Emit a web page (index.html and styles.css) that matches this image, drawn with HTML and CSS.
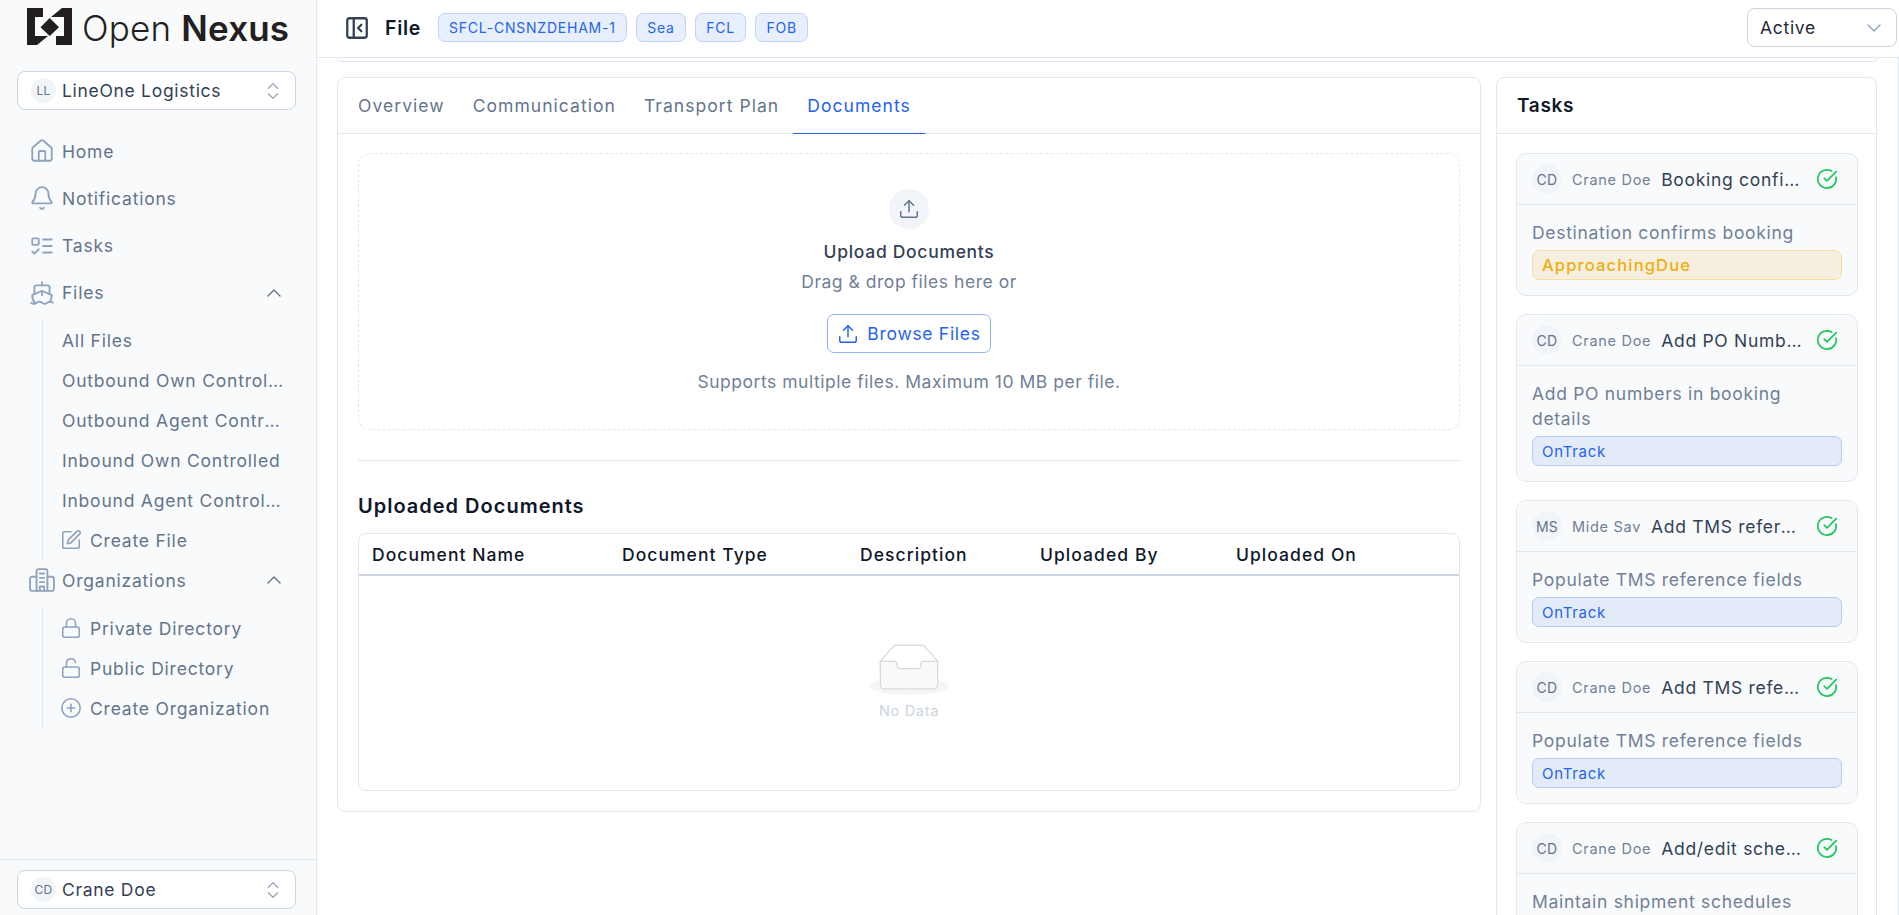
FILE: index.html
```html
<!DOCTYPE html>
<html lang="en">
<head>
    <meta charset="UTF-8">
    <meta name="viewport" content="width=device-width, initial-scale=1.0">
    <title>File - Open Nexus</title>
    <link rel="stylesheet" href="styles.css">
</head>
<body>
    <svg class="sprite" width="0" height="0">
        <symbol id="i-home" viewBox="0 0 24 24"><path d="M15 21v-8a1 1 0 0 0-1-1h-4a1 1 0 0 0-1 1v8"/><path d="M3 10a2 2 0 0 1 .709-1.528l7-5.999a2 2 0 0 1 2.582 0l7 5.999A2 2 0 0 1 21 10v9a2 2 0 0 1-2 2H5a2 2 0 0 1-2-2z"/></symbol>
        <symbol id="i-bell" viewBox="0 0 24 24"><path d="M10.268 21a2 2 0 0 0 3.464 0"/><path d="M3.262 15.326A1 1 0 0 0 4 17h16a1 1 0 0 0 .74-1.673C19.41 13.956 18 12.499 18 8A6 6 0 0 0 6 8c0 4.499-1.411 5.956-2.738 7.326"/></symbol>
        <symbol id="i-tasks" viewBox="0 0 24 24"><rect x="3" y="5" width="6" height="6" rx="1"/><path d="m3 17 2 2 4-4"/><path d="M13 6h8"/><path d="M13 12h8"/><path d="M13 18h8"/></symbol>
        <symbol id="i-ship" viewBox="0 0 24 24"><path d="M12 10.189V14"/><path d="M12 2v3"/><path d="M19 13V7a2 2 0 0 0-2-2H7a2 2 0 0 0-2 2v6"/><path d="M19.38 20A11.6 11.6 0 0 0 21 14l-8.188-3.639a2 2 0 0 0-1.624 0L3 14a11.6 11.6 0 0 0 2.81 7.76"/><path d="M2 21c.6.5 1.2 1 2.5 1 2.5 0 2.5-2 5-2 1.3 0 1.9.5 2.5 1s1.2 1 2.5 1c2.5 0 2.5-2 5-2 1.3 0 1.9.5 2.5 1"/></symbol>
        <symbol id="i-updown" viewBox="0 0 24 24"><path d="m7 15 5 5 5-5"/><path d="m7 9 5-5 5 5"/></symbol>
        <symbol id="i-up" viewBox="0 0 24 24"><path d="m18 15-6-6-6 6"/></symbol>
        <symbol id="i-down" viewBox="0 0 24 24"><path d="m6 9 6 6 6-6"/></symbol>
        <symbol id="i-pen" viewBox="0 0 24 24"><path d="M12 3H5a2 2 0 0 0-2 2v14a2 2 0 0 0 2 2h14a2 2 0 0 0 2-2v-7"/><path d="M18.375 2.625a1 1 0 0 1 3 3l-9.013 9.014a2 2 0 0 1-.853.505l-2.873.84a.5.5 0 0 1-.62-.62l.84-2.873a2 2 0 0 1 .506-.852z"/></symbol>
        <symbol id="i-building" viewBox="0 0 24 24"><path d="M7 22V4a2 2 0 0 1 2-2h6a2 2 0 0 1 2 2v18Z"/><path d="M7 9H3a2 2 0 0 0-2 2v9a2 2 0 0 0 2 2h4"/><path d="M17 9h4a2 2 0 0 1 2 2v9a2 2 0 0 1-2 2h-4"/><path d="M10 6h4"/><path d="M10 10h4"/><path d="M10 14h4"/><path d="M10 22v-4h4v4"/></symbol>
        <symbol id="i-lock" viewBox="0 0 24 24"><rect width="18" height="11" x="3" y="11" rx="2"/><path d="M7 11V7a5 5 0 0 1 10 0v4"/></symbol>
        <symbol id="i-unlock" viewBox="0 0 24 24"><rect width="18" height="11" x="3" y="11" rx="2"/><path d="M7 11V7a5 5 0 0 1 9.9-1"/></symbol>
        <symbol id="i-plus" viewBox="0 0 24 24"><circle cx="12" cy="12" r="10"/><path d="M8 12h8"/><path d="M12 8v8"/></symbol>
        <symbol id="i-upload" viewBox="0 0 24 24"><path d="M12 3v12"/><path d="m17 8-5-5-5 5"/><path d="M21 15v4a2 2 0 0 1-2 2H5a2 2 0 0 1-2-2v-4"/></symbol>
        <symbol id="i-panel" viewBox="0 0 24 24"><rect width="18" height="18" x="3" y="3" rx="2"/><path d="M9 3v18"/><path d="m16 15-3-3 3-3"/></symbol>
        <symbol id="i-check" viewBox="0 0 24 24"><path d="M21.801 10A10 10 0 1 1 17 3.335"/><path d="m9 11 3 3L22 4"/></symbol>
    </svg>

    <div class="app">
        <aside class="sidebar">
            <div class="logo">
                <svg class="logo-mark" viewBox="0 0 45 37">
                    <polygon points="0,0 16,0 16,9 8,9 8,28 21,28 10,37 0,37"/>
                    <polygon points="45,0 45,37 29,37 29,28 37,28 37,9 24,9 35,0"/>
                    <polygon points="22.7,10 32,19.3 22.7,28 13.5,19.3"/>
                </svg>
                <span class="logo-text"><span class="logo-light">Open</span> <b>Nexus</b></span>
            </div>

            <button class="select-box org-select">
                <span class="avatar">LL</span>
                <span class="select-name">LineOne Logistics</span>
                <svg class="icon updown"><use href="#i-updown"/></svg>
            </button>

            <nav class="nav">
                <a class="nav-item"><svg class="icon"><use href="#i-home"/></svg>Home</a>
                <a class="nav-item"><svg class="icon"><use href="#i-bell"/></svg>Notifications</a>
                <a class="nav-item"><svg class="icon"><use href="#i-tasks"/></svg>Tasks</a>
                <a class="nav-item"><svg class="icon"><use href="#i-ship"/></svg>Files<svg class="icon caret"><use href="#i-up"/></svg></a>
                <div class="sub-list">
                    <a class="sub-item"><span class="truncate">All Files</span></a>
                    <a class="sub-item"><span class="truncate">Outbound Own Controlled</span></a>
                    <a class="sub-item"><span class="truncate">Outbound Agent Controlled</span></a>
                    <a class="sub-item"><span class="truncate">Inbound Own Controlled</span></a>
                    <a class="sub-item"><span class="truncate">Inbound Agent Controlled</span></a>
                    <a class="sub-item"><svg class="icon small"><use href="#i-pen"/></svg>Create File</a>
                </div>
                <a class="nav-item org-item"><svg class="icon"><use href="#i-building"/></svg>Organizations<svg class="icon caret"><use href="#i-up"/></svg></a>
                <div class="sub-list">
                    <a class="sub-item"><svg class="icon small"><use href="#i-lock"/></svg>Private Directory</a>
                    <a class="sub-item"><svg class="icon small"><use href="#i-unlock"/></svg>Public Directory</a>
                    <a class="sub-item"><svg class="icon small"><use href="#i-plus"/></svg>Create Organization</a>
                </div>
            </nav>

            <div class="sidebar-footer">
                <button class="select-box">
                    <span class="avatar">CD</span>
                    <span class="select-name">Crane Doe</span>
                    <svg class="icon updown"><use href="#i-updown"/></svg>
                </button>
            </div>
        </aside>

        <div class="page">
            <header class="topbar">
                <svg class="icon panel-toggle"><use href="#i-panel"/></svg>
                <h1>File</h1>
                <div class="chips">
                    <span class="chip">SFCL-CNSNZDEHAM-1</span>
                    <span class="chip">Sea</span>
                    <span class="chip">FCL</span>
                    <span class="chip">FOB</span>
                </div>
                <button class="status-select">Active<svg class="icon"><use href="#i-down"/></svg></button>
            </header>

            <div class="content">
                <div class="summary-edge"></div>
                <div class="columns">
                    <section class="card main-card">
                        <div class="tabs">
                            <a class="tab">Overview</a>
                            <a class="tab">Communication</a>
                            <a class="tab">Transport Plan</a>
                            <a class="tab active">Documents</a>
                        </div>
                        <div class="documents">
                            <div class="dropzone">
                                <span class="upload-circle"><svg class="icon"><use href="#i-upload"/></svg></span>
                                <div class="drop-title">Upload Documents</div>
                                <div class="drop-text">Drag &amp; drop files here or</div>
                                <button class="browse-btn"><svg class="icon"><use href="#i-upload"/></svg>Browse Files</button>
                                <div class="drop-hint">Supports multiple files. Maximum 10 MB per file.</div>
                            </div>
                            <hr class="divider">
                            <h2>Uploaded Documents</h2>
                            <div class="table-wrap">
                                <table class="doc-table">
                                    <thead>
                                        <tr>
                                            <th class="col-name">Document Name</th>
                                            <th class="col-type">Document Type</th>
                                            <th class="col-desc">Description</th>
                                            <th class="col-by">Uploaded By</th>
                                            <th>Uploaded On</th>
                                        </tr>
                                    </thead>
                                </table>
                                <div class="empty">
                                    <svg class="empty-img" viewBox="0 0 64 41">
                                        <g transform="translate(0 1)" fill="none" fill-rule="evenodd">
                                            <ellipse fill="#f5f5f5" cx="32" cy="33" rx="32" ry="7"/>
                                            <g fill-rule="nonzero" stroke="#d9d9d9">
                                                <path d="M55 12.76L44.854 1.258C44.367.474 43.656 0 42.907 0H21.093c-.749 0-1.46.474-1.947 1.257L9 12.761V22h46v-9.24z"/>
                                                <path d="M41.613 15.931c0-1.605.994-2.93 2.227-2.931H55v18.137C55 33.26 53.68 35 52.05 35h-40.1C10.32 35 9 33.259 9 31.137V13h11.16c1.233 0 2.227 1.323 2.227 2.928v.022c0 1.605 1.005 2.901 2.237 2.901h14.752c1.232 0 2.237-1.308 2.237-2.913v-.007z" fill="#fafafa"/>
                                            </g>
                                        </g>
                                    </svg>
                                    <div class="empty-text">No Data</div>
                                </div>
                            </div>
                        </div>
                    </section>

                    <section class="card tasks-card">
                        <div class="tasks-head">Tasks</div>
                        <div class="task-list">
                            <article class="task">
                                <div class="task-head">
                                    <span class="avatar">CD</span>
                                    <span class="task-owner">Crane Doe</span>
                                    <span class="task-title">Booking confirmation</span>
                                    <svg class="icon task-check"><use href="#i-check"/></svg>
                                </div>
                                <div class="task-body">
                                    <p>Destination confirms booking</p>
                                    <span class="badge warn">ApproachingDue</span>
                                </div>
                            </article>
                            <article class="task">
                                <div class="task-head">
                                    <span class="avatar">CD</span>
                                    <span class="task-owner">Crane Doe</span>
                                    <span class="task-title">Add PO Numbers</span>
                                    <svg class="icon task-check"><use href="#i-check"/></svg>
                                </div>
                                <div class="task-body">
                                    <p>Add PO numbers in booking details</p>
                                    <span class="badge">OnTrack</span>
                                </div>
                            </article>
                            <article class="task">
                                <div class="task-head">
                                    <span class="avatar">MS</span>
                                    <span class="task-owner">Mide Sav</span>
                                    <span class="task-title">Add TMS reference</span>
                                    <svg class="icon task-check"><use href="#i-check"/></svg>
                                </div>
                                <div class="task-body">
                                    <p>Populate TMS reference fields</p>
                                    <span class="badge">OnTrack</span>
                                </div>
                            </article>
                            <article class="task">
                                <div class="task-head">
                                    <span class="avatar">CD</span>
                                    <span class="task-owner">Crane Doe</span>
                                    <span class="task-title">Add TMS reference</span>
                                    <svg class="icon task-check"><use href="#i-check"/></svg>
                                </div>
                                <div class="task-body">
                                    <p>Populate TMS reference fields</p>
                                    <span class="badge">OnTrack</span>
                                </div>
                            </article>
                            <article class="task">
                                <div class="task-head">
                                    <span class="avatar">CD</span>
                                    <span class="task-owner">Crane Doe</span>
                                    <span class="task-title">Add/edit schedule</span>
                                    <svg class="icon task-check"><use href="#i-check"/></svg>
                                </div>
                                <div class="task-body">
                                    <p>Maintain shipment schedules</p>
                                </div>
                            </article>
                        </div>
                    </section>
                </div>
            </div>
        </div>
    </div>
</body>
</html>
```

FILE: styles.css
```css
* {
    box-sizing: border-box;
}
html, body {
    height: 100%;
}
body {
    margin: 0;
    overflow: hidden;
    font-family: 'Inter', 'Noto Sans', sans-serif;
    font-size: 17.5px;
    letter-spacing: 0.04em;
    color: #334155;
    background-color: #fff;
}
button {
    font: inherit;
    letter-spacing: inherit;
    cursor: pointer;
}
.sprite {
    position: absolute;
}
.icon {
    width: 20px;
    height: 20px;
    flex: none;
    fill: none;
    stroke: #8fa3bf;
    stroke-width: 1.7;
    stroke-linecap: round;
    stroke-linejoin: round;
}
.icon.small {
    width: 22px;
    height: 22px;
    margin-left: -2px;
}
.truncate {
    display: block;
    width: 222px;
    overflow: hidden;
    white-space: nowrap;
    text-overflow: ellipsis;
}
.app {
    display: flex;
    height: 100%;
}

/* sidebar */
.sidebar {
    width: 317px;
    flex: none;
    display: flex;
    flex-direction: column;
    height: 100%;
    background-color: #f8fafc;
    border-right: 1px solid #e2e8f0;
}
.logo {
    height: 71px;
    display: flex;
    align-items: flex-start;
    gap: 10px;
    padding: 8px 0 0 27px;
    color: #231f20;
}
.logo-mark {
    width: 45px;
    height: 37px;
    fill: #231f20;
}
.logo-text {
    margin-top: 2px;
    font-size: 35px;
    line-height: 37px;
    letter-spacing: 0.005em;
    white-space: nowrap;
}
.logo-light {
    font-weight: 300;
}
.logo-text b {
    font-weight: 600;
}
.select-box {
    width: 279px;
    height: 39px;
    margin-left: 17px;
    padding: 0 11px 0 13px;
    display: flex;
    align-items: center;
    gap: 6px;
    background-color: #fff;
    border: 1px solid #cbd5e1;
    border-radius: 8px;
    color: #334155;
    text-align: left;
}
.select-name {
    flex: 1;
}
.avatar {
    width: 25px;
    height: 25px;
    flex: none;
    display: flex;
    align-items: center;
    justify-content: center;
    border-radius: 50%;
    background-color: #f1f5f9;
    color: #64748b;
    font-size: 12px;
    letter-spacing: 0.02em;
}
.updown {
    width: 22px;
    height: 22px;
    stroke-width: 1.4;
}
.nav {
    flex: 1;
    margin-top: 21px;
    padding: 0 17px;
    color: #64748b;
    letter-spacing: 0.045em;
}
.nav-item {
    height: 40px;
    margin-bottom: 7.33px;
    padding-left: 12px;
    display: flex;
    align-items: center;
    gap: 7px;
}
.nav-item > .icon:first-child {
    width: 26px;
    height: 26px;
}
.nav-item > .caret {
    width: 24px;
    height: 24px;
    margin-left: auto;
    margin-right: 13px;
    stroke: #64748b;
    stroke-width: 1.4;
}
.org-item {
    margin-bottom: 8px;
}
.sub-list {
    margin-left: 25px;
    padding-left: 19px;
    border-left: 1px solid #e2e8f0;
}
.sub-item {
    height: 40px;
    display: flex;
    align-items: center;
    gap: 8px;
}
.sidebar-footer {
    height: 56px;
    padding-top: 10px;
    border-top: 1px solid #e2e8f0;
}

/* top bar */
.page {
    flex: 1;
    min-width: 0;
    display: flex;
    flex-direction: column;
    height: 100%;
}
.topbar {
    height: 58px;
    flex: none;
    display: flex;
    align-items: center;
    padding: 0 2px 2px 27px;
    border-bottom: 1px solid #e2e8f0;
}
.panel-toggle {
    width: 26px;
    height: 26px;
    stroke: #334155;
    stroke-width: 2.1;
}
h1 {
    margin: 0 17px 0 15px;
    font-size: 19.5px;
    font-weight: 600;
    color: #0f172a;
}
.chips {
    display: flex;
    gap: 9.5px;
}
.chip {
    height: 29px;
    padding: 0 10px;
    display: flex;
    align-items: center;
    background-color: #e8effc;
    border: 1px solid #bfd3f8;
    border-radius: 7px;
    color: #2563eb;
    font-size: 14px;
    letter-spacing: 0.055em;
}
.status-select {
    width: 150px;
    height: 39px;
    margin-left: auto;
    padding: 0 10px 0 12px;
    display: flex;
    align-items: center;
    justify-content: space-between;
    background-color: #fff;
    border: 1px solid #cbd5e1;
    border-radius: 8px;
    color: #1e293b;
}
.status-select .icon {
    width: 24px;
    height: 24px;
    stroke-width: 1.4;
}

/* content */
.content {
    flex: 1;
    min-height: 0;
    overflow: hidden;
    padding: 0 21px 0 20px;
    border-right: 1px solid #e2e8f0;
}
.summary-edge {
    height: 4px;
    margin-bottom: 15px;
    border: 1px solid #e2e8f0;
    border-top: 0;
    border-radius: 0 0 8px 8px;
}
.columns {
    display: grid;
    grid-template-columns: 1fr 381px;
    gap: 15px;
    align-items: start;
}
.card {
    background-color: #fff;
    border: 1px solid #e2e8f0;
    border-radius: 8px;
}
.tabs {
    height: 56px;
    padding-left: 6px;
    display: flex;
    border-bottom: 1px solid #e2e8f0;
}
.tab {
    padding: 0 14px;
    display: flex;
    align-items: center;
    color: #64748b;
    letter-spacing: 0.06em;
    border-bottom: 1px solid transparent;
    margin-bottom: -1px;
}
.tab.active {
    color: #2563eb;
    border-bottom-color: #2563eb;
}
.documents {
    padding: 19px 20px 20px;
}
.dropzone {
    height: 277px;
    padding-top: 35px;
    display: flex;
    flex-direction: column;
    align-items: center;
    border: 1px dashed #e2e8f0;
    border-radius: 12px;
    line-height: 24px;
    color: #64748b;
}
.upload-circle {
    width: 40px;
    height: 40px;
    display: flex;
    align-items: center;
    justify-content: center;
    border-radius: 50%;
    background-color: #f1f5f9;
}
.upload-circle .icon {
    width: 22px;
    height: 22px;
    stroke: #64748b;
    stroke-width: 1.6;
}
.drop-title {
    margin-top: 11px;
    font-weight: 500;
    color: #334155;
}
.drop-text {
    margin-top: 6px;
    color: #718096;
    letter-spacing: 0.03em;
}
.browse-btn {
    width: 164px;
    height: 39px;
    margin-top: 20px;
    display: flex;
    align-items: center;
    justify-content: center;
    gap: 8px;
    background-color: #fff;
    border: 1px solid #93b4f5;
    border-radius: 7px;
    color: #2563eb;
}
.browse-btn .icon {
    width: 22px;
    height: 22px;
    stroke: #2563eb;
    stroke-width: 1.6;
}
.drop-hint {
    margin-top: 17px;
    color: #718096;
    letter-spacing: 0.03em;
}
.divider {
    height: 1px;
    margin: 30px 0 0;
    border: 0;
    background-color: #e2e8f0;
}
h2 {
    margin: 31px 0 13px;
    font-size: 20px;
    line-height: 28px;
    font-weight: 600;
    letter-spacing: 0.05em;
    color: #0f172a;
}
.table-wrap {
    border: 1px solid #e2e8f0;
    border-radius: 8px;
    overflow: hidden;
}
.doc-table {
    width: 100%;
    border-collapse: collapse;
    table-layout: fixed;
}
.doc-table th {
    height: 41px;
    padding: 0 13px;
    text-align: left;
    font-weight: 500;
    letter-spacing: 0.06em;
    color: #0f172a;
    border-bottom: 2px solid #cbd5e1;
}
.col-name { width: 250px; }
.col-type { width: 238px; }
.col-desc { width: 180px; }
.col-by { width: 196px; }
.empty {
    height: 214px;
    padding-top: 68px;
    display: flex;
    flex-direction: column;
    align-items: center;
}
.empty-img {
    width: 80px;
    height: 51px;
}
.empty-text {
    margin-top: 6px;
    font-size: 14.5px;
    line-height: 20px;
    color: #cbd5e1;
}

/* tasks */
.tasks-head {
    height: 56px;
    padding-left: 20px;
    display: flex;
    align-items: center;
    font-size: 19px;
    font-weight: 600;
    color: #0f172a;
    border-bottom: 1px solid #e2e8f0;
}
.task-list {
    padding: 19px 18px 19px 19px;
    display: flex;
    flex-direction: column;
    gap: 18px;
}
.task {
    background-color: #f8fafc;
    border: 1px solid #e2e8f0;
    border-radius: 10px;
}
.task-head {
    height: 51px;
    padding: 0 19px 0 15px;
    display: flex;
    align-items: center;
    border-bottom: 1px solid #e2e8f0;
}
.task-head .avatar {
    width: 30px;
    height: 30px;
    font-size: 14px;
}
.task-owner {
    margin: 0 10px;
    flex: none;
    font-size: 14.5px;
    color: #718096;
}
.task-title {
    flex: 1;
    min-width: 0;
    overflow: hidden;
    white-space: nowrap;
    text-overflow: ellipsis;
    color: #334155;
}
.task-check {
    width: 22px;
    height: 22px;
    margin-left: 14px;
    stroke: #22c55e;
    stroke-width: 1.9;
}
.task-body {
    padding: 15px 15px 15px;
}
.task-body p {
    max-width: 285px;
    margin: 0 0 5px;
    line-height: 25px;
    color: #718096;
}
.badge {
    height: 30px;
    padding-left: 9px;
    display: flex;
    align-items: center;
    background-color: #e4ebf8;
    border: 1px solid #b4cbf5;
    border-radius: 7px;
    color: #2563eb;
    font-size: 15px;
}
.badge.warn {
    background-color: #f6efe0;
    border-color: #f8dfa0;
    color: #f0ad0e;
    font-size: 16.5px;
    font-weight: 500;
    letter-spacing: 0.07em;
}
```
